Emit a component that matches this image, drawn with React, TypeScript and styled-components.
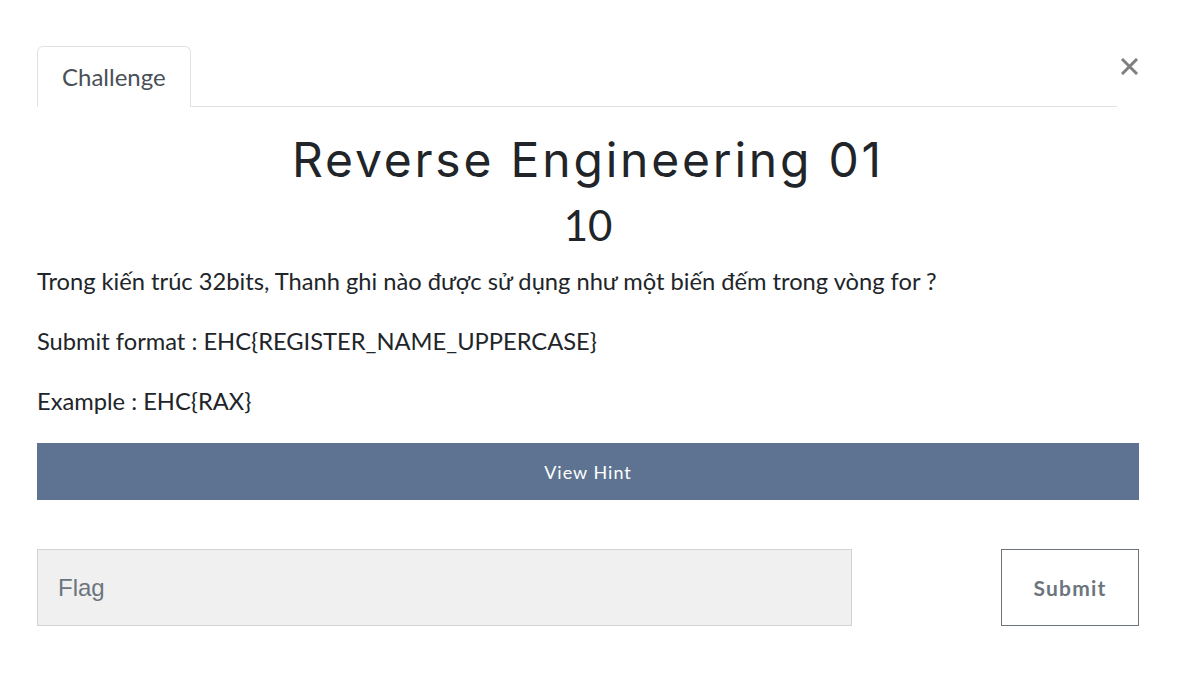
import React from "react";
import styled, { createGlobalStyle } from "styled-components";

const Global = createGlobalStyle`
  html, body { margin: 0; padding: 0; background: #fff; }
  body { font-family: Lato, "Noto Sans", sans-serif; color: #212529; }
  * { box-sizing: border-box; }
`;

const Modal = styled.div`
  width: 1180px;
  min-height: 691px;
  background: #fff;
  padding: 0 41px 0 37px;
  display: flex;
  flex-direction: column;
`;

const Header = styled.div`
  display: flex;
  align-items: flex-start;
`;

const Nav = styled.div`
  flex: 1;
  display: flex;
  margin-top: 46px;
  border-bottom: 1px solid #dee2e6;
`;

const Tab = styled.div`
  height: 61px;
  padding: 0 24px;
  display: flex;
  align-items: center;
  border: 1px solid #dee2e6;
  border-bottom-color: #fff;
  border-radius: 6px 6px 0 0;
  margin-bottom: -1px;
  font-size: 24px;
  color: #495057;
  background: #fff;
`;

const Close = styled.button`
  margin: 57px 0 0 3px;
  width: 19px;
  height: 19px;
  padding: 0;
  border: 0;
  background: transparent;
  display: flex;
  align-items: center;
  justify-content: center;
`;

const Title = styled.h2`
  margin: 24px 0 0;
  font-family: Inter, "Open Sans", sans-serif;
  font-weight: 400;
  font-size: 48px;
  line-height: 57px;
  letter-spacing: 2.8px;
  text-align: center;
  color: #212529;
`;

const Value = styled.h3`
  margin: 12px 0 13px;
  font-weight: 400;
  font-size: 42px;
  line-height: 50px;
  text-align: center;
  color: #212529;
`;

const Para = styled.p`
  margin: 0 0 24px;
  font-size: 23.7px;
  line-height: 36px;
`;

const HintButton = styled.button`
  height: 57px;
  width: 100%;
  border: 0;
  background: #5d7391;
  color: #fff;
  font-family: Lato, sans-serif;
  font-size: 18px;
  letter-spacing: 1px;
`;

const FlagRow = styled.div`
  margin-top: 49px;
  display: flex;
  justify-content: space-between;
`;

const FlagInput = styled.input`
  width: 815px;
  height: 77px;
  background: #f0f0f0;
  border: 1px solid #d3d3d3;
  padding: 0 20px;
  font-family: "Liberation Sans", Arial, sans-serif;
  font-size: 24px;
  color: #495057;
  outline: none;
  &::placeholder { color: #6c757d; }
`;

const SubmitButton = styled.button`
  width: 138px;
  height: 77px;
  background: #fff;
  border: 1px solid #6c757d;
  color: #6c757d;
  font-family: Lato, sans-serif;
  font-weight: 700;
  font-size: 21px;
  letter-spacing: 1.2px;
`;

export default function App() {
  return (
    <>
      <Global />
      <Modal>
        <Header>
          <Nav>
            <Tab>Challenge</Tab>
          </Nav>
          <Close aria-label="Close">
            <svg width="17" height="17" viewBox="0 0 17 17">
              <path d="M2 2 L15 15 M15 2 L2 15" stroke="#7f7f7f" strokeWidth="3" strokeLinecap="square" />
            </svg>
          </Close>
        </Header>
        <Title>Reverse Engineering 01</Title>
        <Value>10</Value>
        <Para>Trong kiến trúc 32bits, Thanh ghi nào được sử dụng như một biến đếm trong vòng for ?</Para>
        <Para>Submit format : EHC{"{"}REGISTER_NAME_UPPERCASE{"}"}</Para>
        <Para>Example : EHC{"{"}RAX{"}"}</Para>
        <HintButton>View Hint</HintButton>
        <FlagRow>
          <FlagInput placeholder="Flag" />
          <SubmitButton>Submit</SubmitButton>
        </FlagRow>
      </Modal>
    </>
  );
}
